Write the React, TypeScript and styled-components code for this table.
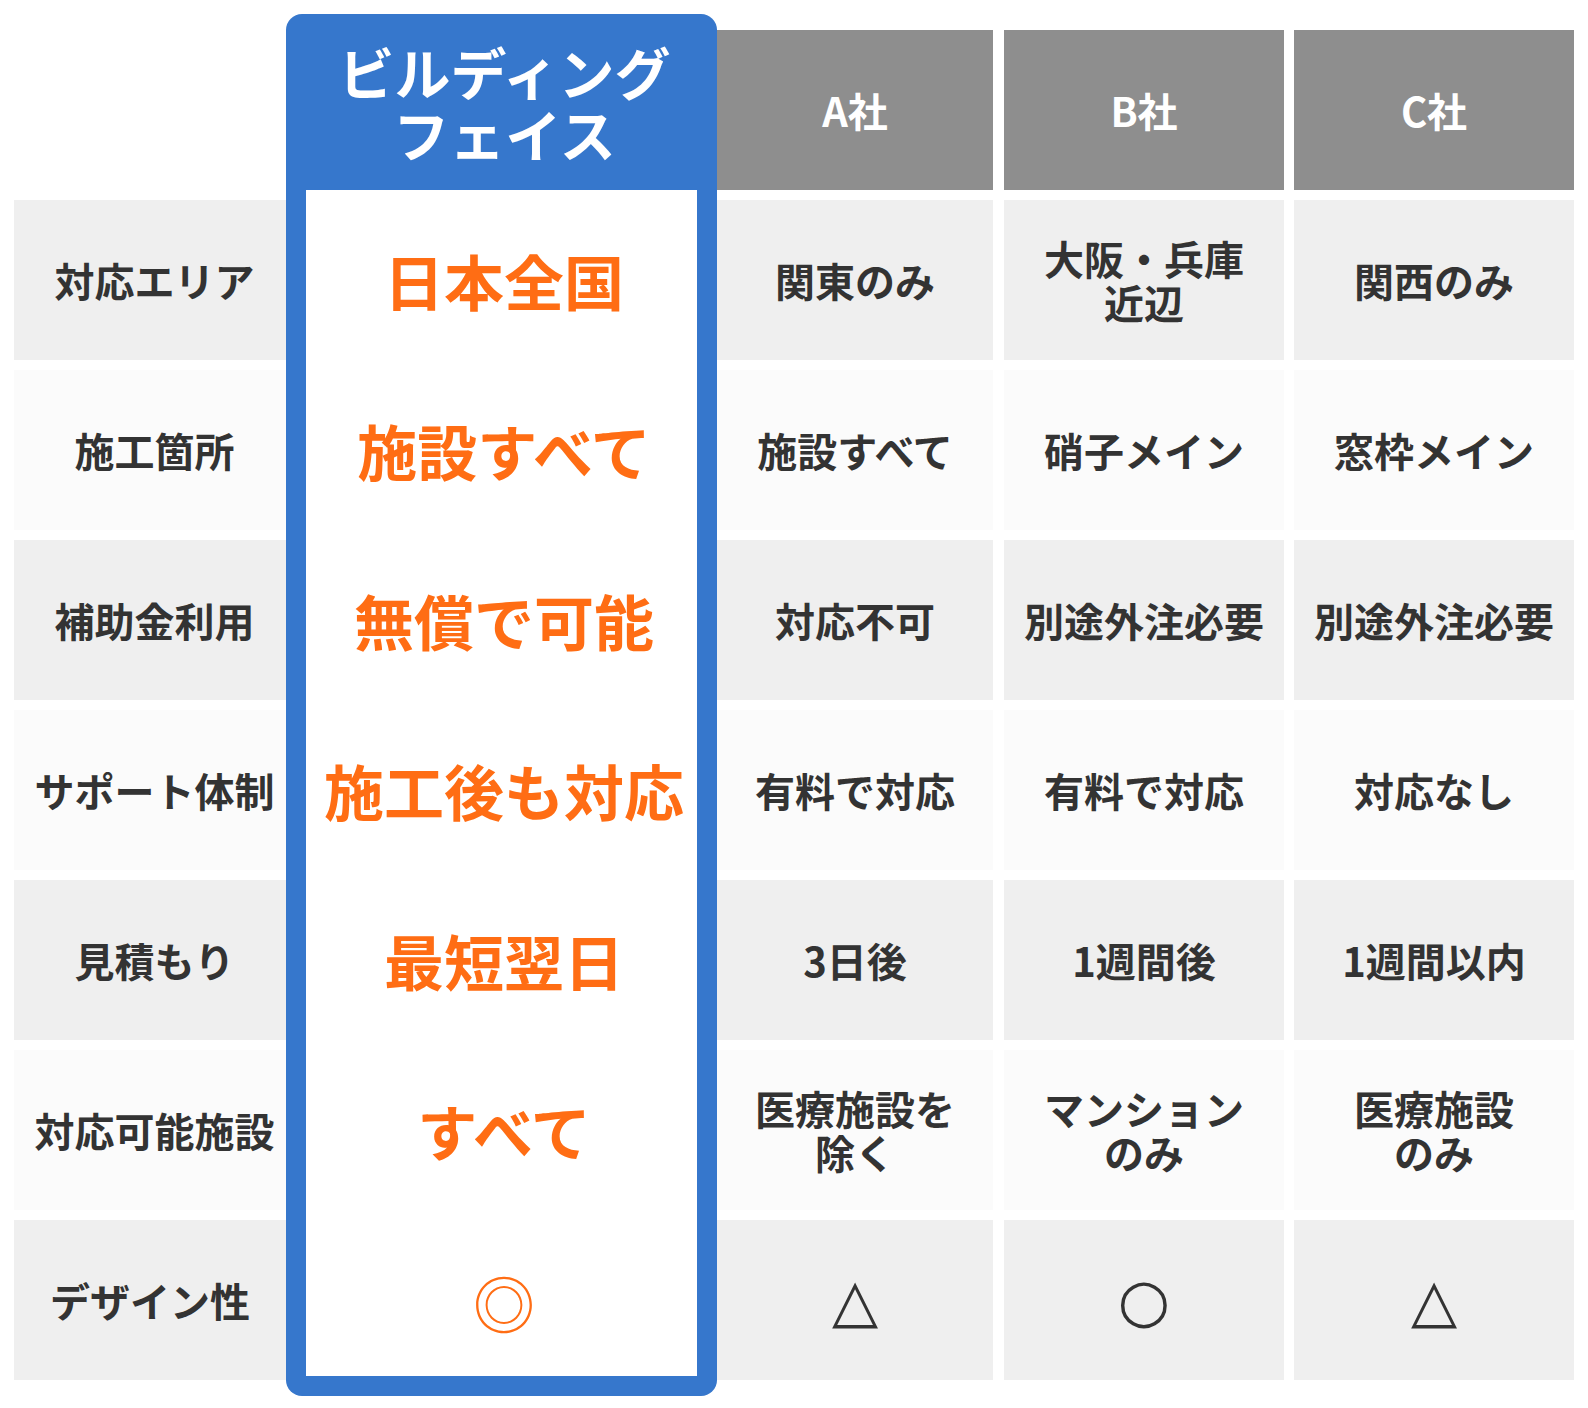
import React from "react";
import styled, { createGlobalStyle } from "styled-components";

const Global = createGlobalStyle`
  html, body { margin: 0; padding: 0; background: #ffffff; }
  body { font-family: "Noto Sans CJK JP", "Noto Sans", sans-serif; }
`;

const Table = styled.div`
  display: flex;
  align-items: flex-start;
  width: 1588px;
  box-sizing: border-box;
  padding: 14px 0 0 14px;
`;

const Column = styled.div<{ $w: number; $ml?: number }>`
  display: flex;
  flex-direction: column;
  gap: 10px;
  width: ${(p) => p.$w}px;
  margin-left: ${(p) => p.$ml ?? 0}px;
  padding-top: 16px;
  flex-shrink: 0;
`;

const Spacer = styled.div`
  height: 160px;
`;

const Cell = styled.div<{ $tone: "odd" | "even" | "head"; $pl?: number }>`
  height: 160px;
  box-sizing: border-box;
  display: flex;
  align-items: center;
  justify-content: center;
  text-align: center;
  padding-left: ${(p) => p.$pl ?? 0}px;
  background: ${(p) =>
    p.$tone === "head" ? "#8e8e8e" : p.$tone === "odd" ? "#efefef" : "#fbfbfb"};
  color: ${(p) => (p.$tone === "head" ? "#ffffff" : "#333333")};
  font-size: 40px;
  font-weight: 700;
  line-height: 1.1;
  white-space: nowrap;
`;

const Featured = styled.div`
  width: 431px;
  flex-shrink: 0;
  box-sizing: border-box;
  background: #3677cc;
  border-radius: 16px;
  padding: 0 20px 20px;
  display: flex;
  flex-direction: column;
`;

const FeaturedHead = styled.div`
  height: 176px;
  display: flex;
  align-items: center;
  justify-content: center;
  text-align: center;
  padding-left: 6px;
  color: #ffffff;
  font-size: 56px;
  font-weight: 700;
  line-height: 1.1;
`;

const FeaturedBody = styled.div`
  background: #ffffff;
  display: flex;
  flex-direction: column;
  gap: 10px;
  padding-top: 10px;
`;

const FeaturedCell = styled.div`
  height: 160px;
  display: flex;
  align-items: center;
  justify-content: center;
  padding-left: 5px;
  color: #ff6d14;
  font-size: 60px;
  font-weight: 700;
  line-height: 1.1;
  white-space: nowrap;
  &:last-child {
    height: 156px;
  }
`;

const Mark = styled.span`
  font-family: "DejaVu Sans", sans-serif;
  font-weight: 400;
  font-size: 60px;
  line-height: 1;
  color: #333333;
`;

const DoubleMark = styled.span`
  font-family: "Noto Sans CJK JP", sans-serif;
  font-weight: 400;
  font-size: 62px;
  line-height: 1;
  padding-top: 7px;
  color: #ff6d14;
`;

type Val = React.ReactNode;

const labels: { text: string; pl: number }[] = [
  { text: "対応エリア", pl: 9 },
  { text: "施工箇所", pl: 9 },
  { text: "補助金利用", pl: 9 },
  { text: "サポート体制", pl: 9 },
  { text: "見積もり", pl: 9 },
  { text: "対応可能施設", pl: 9 },
  { text: "デザイン性", pl: 0 },
];

const featured: Val[] = [
  "日本全国",
  "施設すべて",
  "無償で可能",
  "施工後も対応",
  "最短翌日",
  "すべて",
  <DoubleMark>◎</DoubleMark>,
];

const companies: { name: string; w: number; ml: number; vals: Val[] }[] = [
  {
    name: "A社",
    w: 276,
    ml: 0,
    vals: [
      "関東のみ",
      "施設すべて",
      "対応不可",
      "有料で対応",
      "3日後",
      <>医療施設を<br />除く</>,
      <Mark>△</Mark>,
    ],
  },
  {
    name: "B社",
    w: 280,
    ml: 11,
    vals: [
      <>大阪・兵庫<br />近辺</>,
      "硝子メイン",
      "別途外注必要",
      "有料で対応",
      "1週間後",
      <>マンション<br />のみ</>,
      <Mark>○</Mark>,
    ],
  },
  {
    name: "C社",
    w: 280,
    ml: 10,
    vals: [
      "関西のみ",
      "窓枠メイン",
      "別途外注必要",
      "対応なし",
      "1週間以内",
      <>医療施設<br />のみ</>,
      <Mark>△</Mark>,
    ],
  },
];

const tone = (i: number) => (i % 2 === 0 ? "odd" : "even") as "odd" | "even";

export default function App() {
  return (
    <>
      <Global />
      <Table>
        <Column $w={272}>
          <Spacer />
          {labels.map((l, i) => (
            <Cell key={l.text} $tone={tone(i)} $pl={l.pl}>
              {l.text}
            </Cell>
          ))}
        </Column>
        <Featured>
          <FeaturedHead>
            ビルディング
            <br />
            フェイス
          </FeaturedHead>
          <FeaturedBody>
            {featured.map((v, i) => (
              <FeaturedCell key={i}>{v}</FeaturedCell>
            ))}
          </FeaturedBody>
        </Featured>
        {companies.map((c) => (
          <Column key={c.name} $w={c.w} $ml={c.ml}>
            <Cell $tone="head">{c.name}</Cell>
            {c.vals.map((v, i) => (
              <Cell key={i} $tone={tone(i)}>
                {v}
              </Cell>
            ))}
          </Column>
        ))}
      </Table>
    </>
  );
}
